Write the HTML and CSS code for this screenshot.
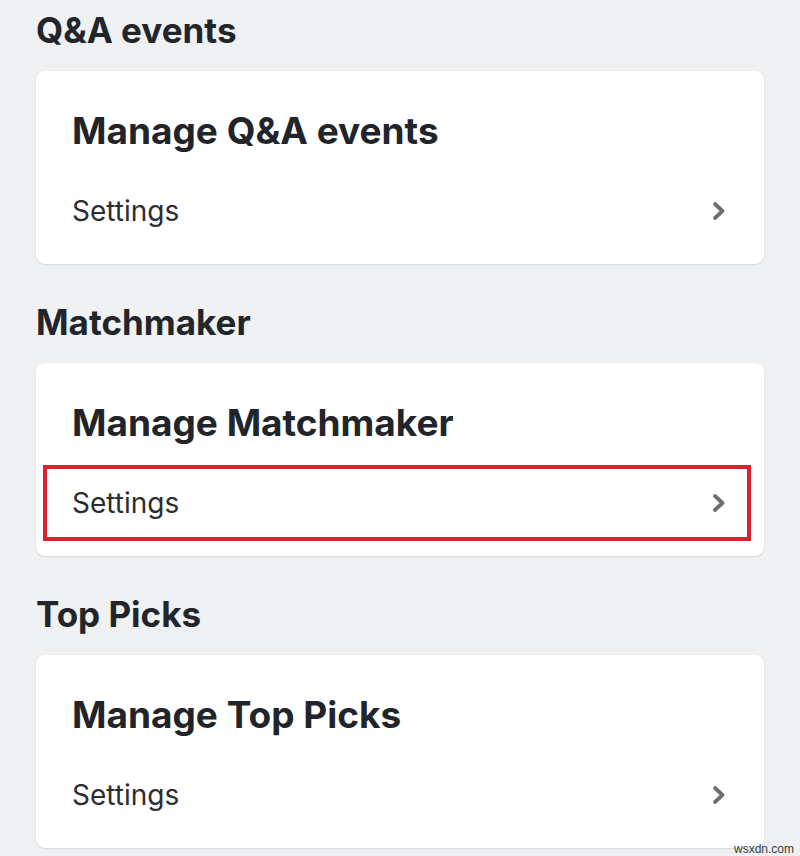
FILE: index.html
```html
<!DOCTYPE html>
<html lang="en">
<head>
<meta charset="utf-8">
<title>Settings</title>
<link rel="stylesheet" href="styles.css">
</head>
<body>
<main class="page">
  <section class="section">
    <h2 class="section-title">Q&amp;A events</h2>
    <div class="card">
      <h3 class="card-title">Manage Q&amp;A events</h3>
      <div class="row">
        <span class="row-label">Settings</span>
        <svg class="chevron" viewBox="0 0 14 20" width="14" height="20" aria-hidden="true"><path d="M3 3 L10.5 10 L3 17" fill="none" stroke="#6c6f74" stroke-width="3.8" stroke-linecap="round" stroke-linejoin="round"/></svg>
      </div>
    </div>
  </section>
  <section class="section">
    <h2 class="section-title">Matchmaker</h2>
    <div class="card">
      <h3 class="card-title">Manage Matchmaker</h3>
      <div class="row">
        <span class="row-label">Settings</span>
        <svg class="chevron" viewBox="0 0 14 20" width="14" height="20" aria-hidden="true"><path d="M3 3 L10.5 10 L3 17" fill="none" stroke="#6c6f74" stroke-width="3.8" stroke-linecap="round" stroke-linejoin="round"/></svg>
      </div>
      <div class="highlight"></div>
    </div>
  </section>
  <section class="section">
    <h2 class="section-title">Top Picks</h2>
    <div class="card">
      <h3 class="card-title">Manage Top Picks</h3>
      <div class="row">
        <span class="row-label">Settings</span>
        <svg class="chevron" viewBox="0 0 14 20" width="14" height="20" aria-hidden="true"><path d="M3 3 L10.5 10 L3 17" fill="none" stroke="#6c6f74" stroke-width="3.8" stroke-linecap="round" stroke-linejoin="round"/></svg>
      </div>
    </div>
  </section>
</main>
<div class="watermark">wsxdn.com</div>
</body>
</html>
```
FILE: styles.css
```css
html, body {
  margin: 0;
  padding: 0;
}
body {
  background: #f0f1f3;
  font-family: "Inter", "Lato", sans-serif;
  color: #212429;
  height: 856px;
  overflow: hidden;
  position: relative;
}
.page {
  padding: 0 36px;
}
.section {
  margin-bottom: 28px;
}
.section-title {
  margin: 0 0 11px;
  height: 60px;
  line-height: 60px;
  font-size: 35px;
  font-weight: 700;
  color: #22252a;
}
.card {
  position: relative;
  background: #ffffff;
  border-radius: 9px;
  height: 193px;
  box-sizing: border-box;
  padding: 30px 0 0 36px;
  box-shadow: 0 1px 2px rgba(0, 0, 0, 0.12);
}
.card-title {
  margin: 0 0 12px;
  height: 60px;
  line-height: 60px;
  font-size: 37px;
  font-weight: 700;
  color: #212429;
}
.row {
  display: flex;
  align-items: center;
  justify-content: space-between;
  height: 76px;
  padding-right: 38px;
}
.row-label {
  font-size: 28px;
  font-weight: 400;
  color: #2b2d31;
}
.chevron {
  display: block;
}
.highlight {
  position: absolute;
  left: 7px;
  top: 102px;
  width: 708px;
  height: 76px;
  box-sizing: border-box;
  border: 4px solid #d9222d;
}
.watermark {
  position: absolute;
  right: 6px;
  bottom: 0;
  font-family: "Liberation Sans Narrow", "Liberation Sans", sans-serif;
  font-size: 12px;
  line-height: 14px;
  color: #3a3a3a;
}
```
